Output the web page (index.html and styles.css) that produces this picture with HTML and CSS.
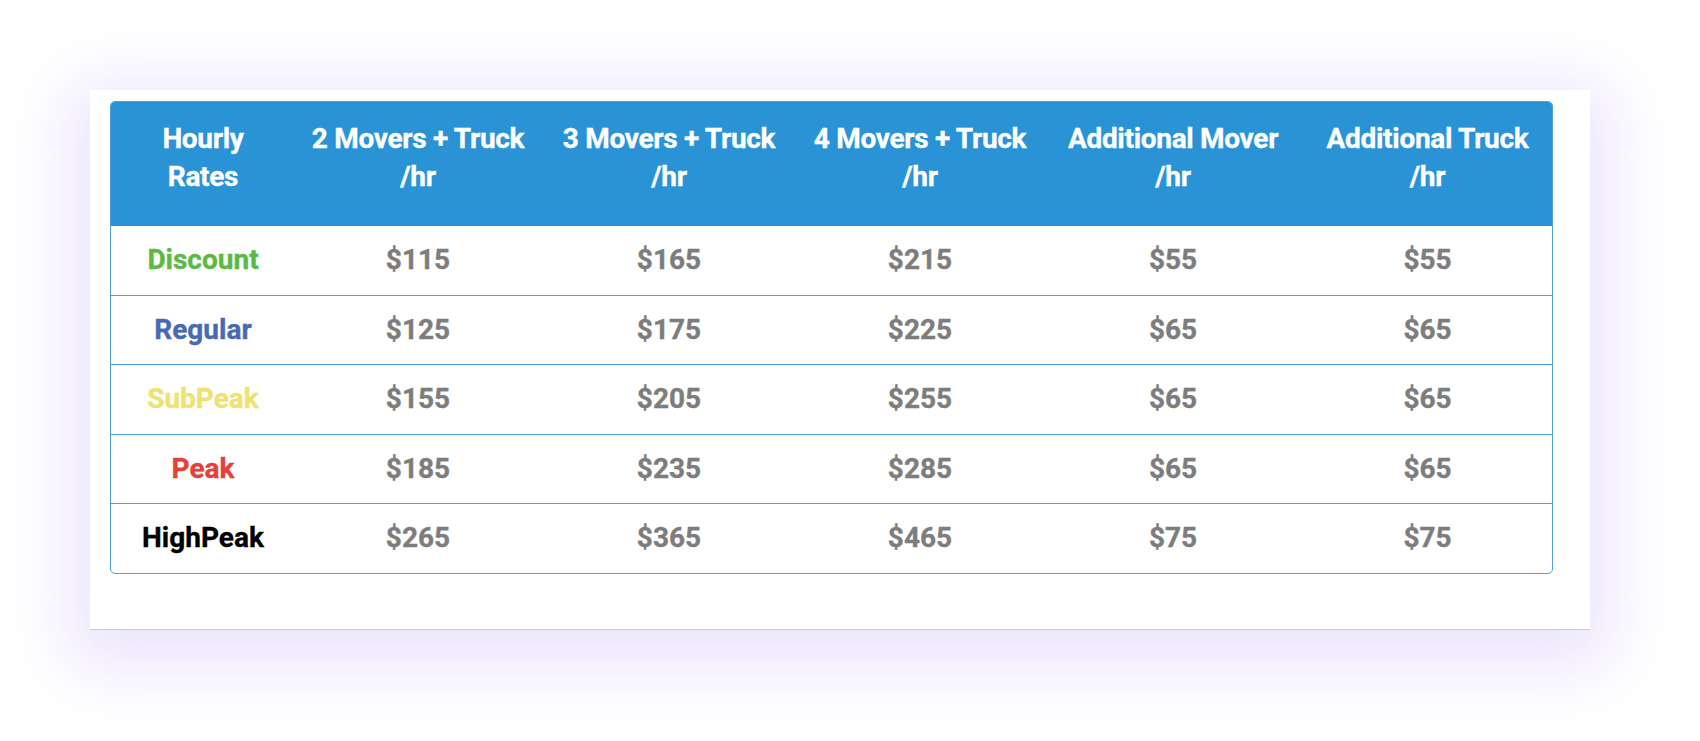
FILE: index.html
```html
<!DOCTYPE html>
<html lang="en">
<head>
<meta charset="utf-8">
<title>Hourly Rates</title>
<link rel="stylesheet" href="styles.css">
</head>
<body>
<div class="page">
  <div class="card">
    <table class="rates">
      <colgroup>
        <col class="c1"><col class="c2"><col class="c3"><col class="c4"><col class="c5"><col class="c6">
      </colgroup>
      <thead>
        <tr>
          <th>Hourly<br>Rates</th>
          <th>2 Movers + Truck<br>/hr</th>
          <th>3 Movers + Truck<br>/hr</th>
          <th>4 Movers + Truck<br>/hr</th>
          <th>Additional Mover<br>/hr</th>
          <th>Additional Truck<br>/hr</th>
        </tr>
      </thead>
      <tbody>
        <tr><td class="lbl discount">Discount</td><td>$115</td><td>$165</td><td>$215</td><td>$55</td><td>$55</td></tr>
        <tr><td class="lbl regular">Regular</td><td>$125</td><td>$175</td><td>$225</td><td>$65</td><td>$65</td></tr>
        <tr><td class="lbl subpeak">SubPeak</td><td>$155</td><td>$205</td><td>$255</td><td>$65</td><td>$65</td></tr>
        <tr><td class="lbl peak">Peak</td><td>$185</td><td>$235</td><td>$285</td><td>$65</td><td>$65</td></tr>
        <tr><td class="lbl highpeak">HighPeak</td><td>$265</td><td>$365</td><td>$465</td><td>$75</td><td>$75</td></tr>
      </tbody>
    </table>
  </div>
</div>
</body>
</html>
```
FILE: styles.css
```css
html, body {
  margin: 0;
  padding: 0;
  background: #ffffff;
}
body {
  font-family: Roboto, "Liberation Sans", Arial, sans-serif;
  min-height: 741px;
}
.page {
  padding: 90px 0 110px 90px;
}
.card {
  width: 1500px;
  box-sizing: border-box;
  padding: 11px 37px 55px 20px;
  background: #ffffff;
  border-bottom: 1px solid #cdc5df;
  box-shadow: 0 16px 64px 20px rgba(204, 186, 250, 0.4);
}
.rates {
  width: 1443px;
  table-layout: fixed;
  border-collapse: separate;
  border-spacing: 0;
  border: 1px solid #4ea2da;
  border-radius: 5px;
  overflow: hidden;
  font-weight: 700;
  font-size: 28px;
  text-align: center;
  -webkit-text-stroke: 0.35px currentColor;
}
.c1 { width: 184px; }
.c2 { width: 246px; }
.c3 { width: 256px; }
.c4 { width: 246px; }
.c5 { width: 260px; }
.c6 { width: 249px; }
.rates th {
  background: #2a93d6;
  color: #ffffff;
  font-weight: 700;
  line-height: 38px;
  padding: 18px 0 30px;
  letter-spacing: -0.3px;
}
.rates td {
  color: #7d7d7d;
  line-height: 38.6px;
  padding: 15px 0 15px;
  border-top: 1px solid #4ea2da;
}
.rates thead + tbody tr:first-child td {
  border-top: none;
}
.rates td.discount { color: #5bb944; }
.rates td.regular { color: #4a69b2; }
.rates td.subpeak { color: #efe271; }
.rates td.peak { color: #e6403a; }
.rates td.highpeak { color: #000000; }
```
